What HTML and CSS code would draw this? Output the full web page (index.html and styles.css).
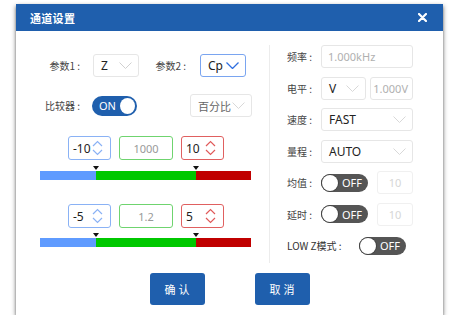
FILE: index.html
```html
<!DOCTYPE html>
<html lang="zh-CN">
<head>
    <meta charset="UTF-8">
    <title>通道设置</title>
    <link rel="stylesheet" href="styles.css">
</head>
<body>
    <div class="dialog">
        <div class="dialog-header">
            <span class="title">通道设置</span>
            <svg class="close" width="9" height="9" viewBox="0 0 9 9"><path d="M1 1L8 8M8 1L1 8" stroke="#fff" stroke-width="2.2" stroke-linecap="round"/></svg>
        </div>
        <div class="dialog-body">
            <div class="columns">
                <div class="col-left">
                    <div class="row row-params">
                        <span class="label">参数1 :</span>
                        <div class="select w-46"><span>Z</span><svg class="chev" width="13" height="7" viewBox="0 0 13 7"><path d="M0.5 0.5L6.5 6.5L12.5 0.5" fill="none" stroke="#d0d0d0"/></svg></div>
                        <span class="label label-2">参数2 :</span>
                        <div class="select w-46 active"><span>Cp</span><svg class="chev" width="13" height="7" viewBox="0 0 13 7"><path d="M0.5 0.5L6.5 6.5L12.5 0.5" fill="none" stroke="#2f6fe0" stroke-width="1.3"/></svg></div>
                    </div>
                    <div class="row row-compare">
                        <span class="label">比较器 :</span>
                        <div class="toggle on"><span class="toggle-text">ON</span><span class="knob"></span></div>
                        <div class="select w-62"><span class="muted">百分比</span><svg class="chev" width="13" height="7" viewBox="0 0 13 7"><path d="M0.5 0.5L6.5 6.5L12.5 0.5" fill="none" stroke="#d8d8d8"/></svg></div>
                    </div>

                    <div class="spin-row first">
                        <div class="spin low"><span>-10</span><svg width="11" height="16" viewBox="0 0 11 16"><path d="M1 6L5.5 1.5L10 6M1 10L5.5 14.5L10 10" fill="none" stroke="#8ab2f5" stroke-width="1.2"/></svg></div>
                        <div class="spin mid">1000</div>
                        <div class="spin high"><span>10</span><svg width="11" height="16" viewBox="0 0 11 16"><path d="M1 6L5.5 1.5L10 6M1 10L5.5 14.5L10 10" fill="none" stroke="#e05a5a" stroke-width="1.2"/></svg></div>
                    </div>
                    <div class="bar">
                        <div class="seg seg-low"></div>
                        <div class="seg seg-mid"></div>
                        <div class="seg seg-high"></div>
                        <span class="marker m-left"></span>
                        <span class="marker m-right"></span>
                    </div>

                    <div class="spin-row second">
                        <div class="spin low"><span>-5</span><svg width="11" height="16" viewBox="0 0 11 16"><path d="M1 6L5.5 1.5L10 6M1 10L5.5 14.5L10 10" fill="none" stroke="#8ab2f5" stroke-width="1.2"/></svg></div>
                        <div class="spin mid">1.2</div>
                        <div class="spin high"><span>5</span><svg width="11" height="16" viewBox="0 0 11 16"><path d="M1 6L5.5 1.5L10 6M1 10L5.5 14.5L10 10" fill="none" stroke="#e05a5a" stroke-width="1.2"/></svg></div>
                    </div>
                    <div class="bar bar-second">
                        <div class="seg seg-low"></div>
                        <div class="seg seg-mid"></div>
                        <div class="seg seg-high"></div>
                        <span class="marker m-left"></span>
                        <span class="marker m-right"></span>
                    </div>
                </div>

                <div class="divider"></div>

                <div class="col-right">
                    <div class="rrow">
                        <span class="rlabel">频率 :</span>
                        <div class="input w-92">1.000kHz</div>
                    </div>
                    <div class="rrow">
                        <span class="rlabel">电平 :</span>
                        <div class="select w-45"><span>V</span><svg class="chev" width="13" height="7" viewBox="0 0 13 7"><path d="M0.5 0.5L6.5 6.5L12.5 0.5" fill="none" stroke="#d8d8d8"/></svg></div>
                        <div class="input w-43 right">1.000V</div>
                    </div>
                    <div class="rrow">
                        <span class="rlabel">速度 :</span>
                        <div class="select w-92"><span>FAST</span><svg class="chev" width="13" height="7" viewBox="0 0 13 7"><path d="M0.5 0.5L6.5 6.5L12.5 0.5" fill="none" stroke="#d8d8d8"/></svg></div>
                    </div>
                    <div class="rrow">
                        <span class="rlabel">量程 :</span>
                        <div class="select w-92"><span>AUTO</span><svg class="chev" width="13" height="7" viewBox="0 0 13 7"><path d="M0.5 0.5L6.5 6.5L12.5 0.5" fill="none" stroke="#d8d8d8"/></svg></div>
                    </div>
                    <div class="rrow">
                        <span class="rlabel">均值 :</span>
                        <div class="toggle off"><span class="knob"></span><span class="toggle-text">OFF</span></div>
                        <div class="input w-36 center faint">10</div>
                    </div>
                    <div class="rrow">
                        <span class="rlabel">延时 :</span>
                        <div class="toggle off"><span class="knob"></span><span class="toggle-text">OFF</span></div>
                        <div class="input w-36 center faint">10</div>
                    </div>
                    <div class="rrow">
                        <span class="rlabel wide">LOW Z模式 :</span>
                        <div class="toggle off"><span class="knob"></span><span class="toggle-text">OFF</span></div>
                    </div>
                </div>
            </div>

            <div class="actions">
                <button class="btn">确认</button>
                <button class="btn">取消</button>
            </div>
        </div>
    </div>
</body>
</html>
```

FILE: styles.css
```css
body {
    margin: 0;
    background: #fff;
    font-family: "Noto Sans", "Noto Sans CJK SC", sans-serif;
    color: #333;
}
.dialog {
    margin: 4px 0 0 16px;
    width: 427px;
    height: 311px;
    background: #fff;
    box-shadow: 0 3px 3px rgba(0,0,0,0.45), -2px 1px 4px rgba(0,0,0,0.15), 2px 1px 4px rgba(0,0,0,0.15);
}
.dialog-header {
    height: 27px;
    background: #1f5fad;
    display: flex;
    align-items: center;
    justify-content: space-between;
    padding: 0 16px 0 14px;
}
.title {
    color: #fff;
    font-size: 11px;
    font-family: "Noto Sans CJK SC", sans-serif;
    font-weight: 700;
    letter-spacing: 0.3px;
}
.close {
    display: block;
}
.dialog-body {
    height: 284px;
}
.columns {
    display: flex;
    height: 232px;
}
.col-left {
    width: 253px;
}
.divider {
    width: 1px;
    margin-top: 14px;
    background: #ececec;
}
.col-right {
    flex: 1;
    padding: 14px 0 0 17px;
    display: flex;
    flex-direction: column;
    gap: 8.5px;
}

.row {
    display: flex;
    align-items: center;
    height: 23px;
}
.row-params {
    margin-top: 23px;
}
.row-compare {
    margin-top: 17px;
}
.label {
    flex-shrink: 0;
    white-space: nowrap;
    width: 64px;
    margin-right: 13px;
    text-align: right;
    font-size: 10px;
    font-family: "Noto Sans CJK SC", sans-serif;
    color: #444;
}
.label-2 {
    width: 47px;
    margin-left: 0;
    margin-right: 14px;
}
.row-compare .toggle {
    margin-left: -1px;
}
.row-compare .select {
    margin-left: 53px;
}

.select, .input {
    box-sizing: border-box;
    flex-shrink: 0;
    height: 23px;
    border: 1px solid #e6e6e6;
    border-radius: 3px;
    display: flex;
    align-items: center;
    font-size: 12px;
    color: #222;
    background: #fff;
}
.select {
    justify-content: space-between;
    padding: 0 6px 0 7px;
}
.select.active {
    border-color: #7aa5f0;
}
.muted {
    color: #666;
    font-family: "Noto Sans CJK SC", sans-serif;
    font-size: 11px;
}
.input {
    padding: 0 6px;
    color: #b0b0b0;
    font-size: 11px;
}
.input.right { justify-content: flex-end; padding-right: 4px; }
.input.center { justify-content: center; }
.input.faint { color: #d6d6d6; border-color: #f0f0f0; }
.w-36 { width: 36px; }
.w-43 { width: 43px; }
.w-45 { width: 45px; }
.w-46 { width: 46px; }
.w-62 { width: 62px; }
.w-92 { width: 92px; }

.toggle {
    box-sizing: border-box;
    flex-shrink: 0;
    height: 20px;
    width: 45px;
    border-radius: 10px;
    display: flex;
    align-items: center;
    padding: 0 2px;
    gap: 4px;
}
.toggle.on {
    background: #1f5fad;
    justify-content: space-between;
    padding-left: 7px;
}
.toggle.off {
    background: #555;
    width: 47px;
    height: 18px;
    padding: 0 1px;
}
.toggle .knob {
    width: 16px;
    height: 16px;
    border-radius: 50%;
    background: #fff;
}
.toggle.off .knob {
    width: 16px;
    height: 16px;
    box-shadow: 0 0 0 1px #444;
}
.toggle-text {
    color: #fff;
    font-size: 11px;
}

.spin-row {
    display: flex;
    gap: 8px;
    padding-left: 52px;
    height: 24px;
}
.spin-row.first { margin-top: 19px; }
.spin-row.second { margin-top: 24px; }
.spin {
    box-sizing: border-box;
    width: 43px;
    height: 24px;
    border: 1px solid #8ab2f5;
    border-radius: 3px;
    display: flex;
    align-items: center;
    justify-content: space-between;
    padding: 0 7px 0 4px;
    font-size: 12px;
    color: #222;
}
.spin.high {
    border-color: #e06060;
}
.spin.mid {
    width: 54px;
    border-color: #6fd46f;
    justify-content: center;
    padding: 0;
    color: #999;
    font-size: 11px;
}

.bar {
    position: relative;
    display: flex;
    margin: 11px 0 0 24px;
    width: 211px;
    height: 9px;
}
.bar-second {
    margin-top: 10px;
}
.seg-low { width: 56px; background: #5f9bff; }
.seg-mid { width: 100px; background: #00c800; }
.seg-high { width: 55px; background: #c00000; }
.marker {
    position: absolute;
    top: -5px;
    width: 0;
    height: 0;
    border-left: 3.5px solid transparent;
    border-right: 3.5px solid transparent;
    border-top: 4px solid #111;
}
.m-left { left: 53px; }
.m-right { left: 153px; }

.rrow {
    display: flex;
    align-items: center;
    height: 23px;
    gap: 4px;
}
.rlabel {
    flex-shrink: 0;
    white-space: nowrap;
    width: 30px;
    font-size: 10px;
    font-family: "Noto Sans CJK SC", sans-serif;
    color: #444;
}
.rlabel.wide {
    width: 68px;
    color: #333;
}
.rrow .toggle + .input {
    margin-left: 5px;
}

.actions {
    display: flex;
    justify-content: center;
    gap: 50px;
    margin-top: 10px;
}
.btn {
    width: 55px;
    height: 32px;
    border: none;
    border-radius: 3px;
    background: #1f5fad;
    color: #fff;
    font-family: "Noto Sans CJK SC", sans-serif;
    font-size: 11px;
    letter-spacing: 3px;
    padding: 0 0 0 3px;
}
```
